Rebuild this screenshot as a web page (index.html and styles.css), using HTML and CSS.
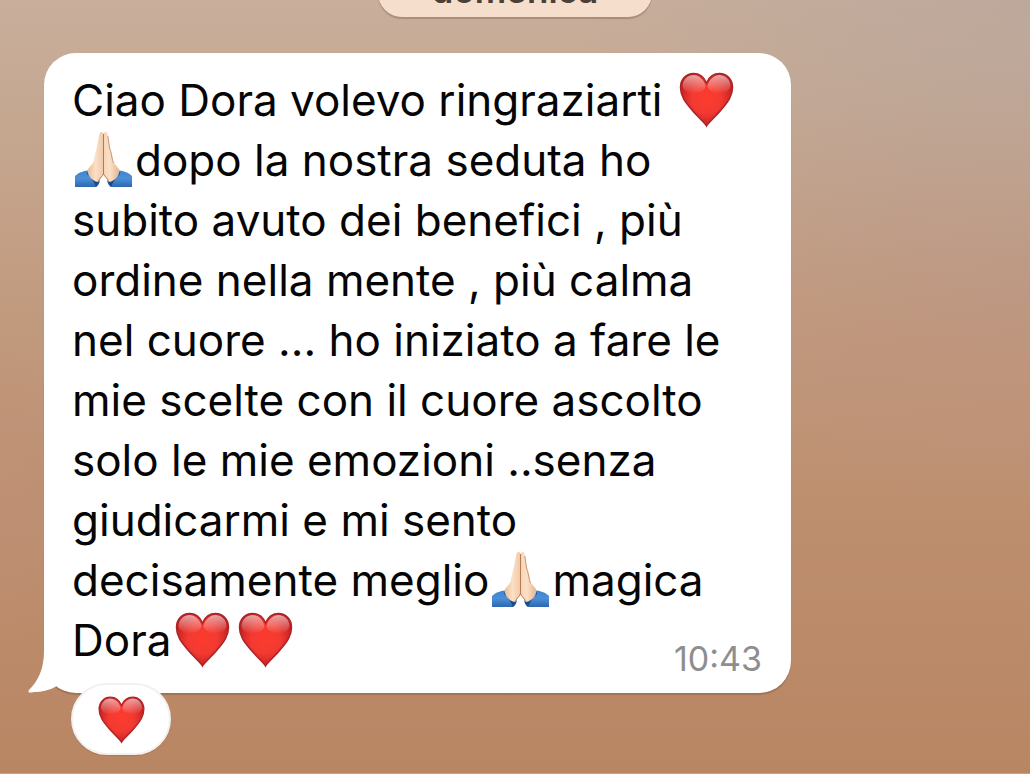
FILE: index.html
```html
<!DOCTYPE html>
<html lang="it">

<head>
    <meta charset="utf-8">
    <meta name="viewport" content="width=device-width, initial-scale=1">
    <title>Chat</title>
    <link rel="stylesheet" href="styles.css">
</head>

<body>
    <svg class="defs" aria-hidden="true">
        <defs>
            <radialGradient id="heartFill" cx="50%" cy="48%" r="56%">
                <stop offset="0" stop-color="#fc3b2e" />
                <stop offset="0.5" stop-color="#f33a31" />
                <stop offset="1" stop-color="#c11c1e" />
            </radialGradient>
            <linearGradient id="heartShine" x1="0" y1="0" x2="0" y2="1">
                <stop offset="0" stop-color="#fff" stop-opacity="0.6" />
                <stop offset="1" stop-color="#fff" stop-opacity="0" />
            </linearGradient>
            <linearGradient id="skinLeft" x1="0" y1="0" x2="1" y2="0">
                <stop offset="0" stop-color="#e9bd98" />
                <stop offset="0.5" stop-color="#fbe0c6" />
                <stop offset="1" stop-color="#efc9a9" />
            </linearGradient>
            <linearGradient id="skinRight" x1="0" y1="0" x2="1" y2="0">
                <stop offset="0" stop-color="#f5d5b9" />
                <stop offset="0.4" stop-color="#fbe0c6" />
                <stop offset="1" stop-color="#e3b48e" />
            </linearGradient>
            <linearGradient id="sleeve" x1="0" y1="0" x2="0" y2="1">
                <stop offset="0" stop-color="#3f83cc" />
                <stop offset="0.5" stop-color="#4a8fd8" />
                <stop offset="1" stop-color="#2d67b0" />
            </linearGradient>
            <symbol id="heart" viewBox="0 0 57 57">
                <path d="M28.500 55C27 52 20 46 14 39C7 31 2.500 25 2.500 16.500C2.500 8 8.500 2.500 15.500 2.500C21.500 2.500 26 6 28.500 12C31 6 35.500 2.500 41.500 2.500C48.500 2.500 54.500 8 54.500 16.500C54.500 25 50 31 43 39C37 46 30 52 28.500 55Z" fill="url(#heartFill)" stroke="#a92529" stroke-width="1.500" />
                <path d="M4.500 15C5 7.500 10.500 4 15.500 4C21 4 25.500 8 27.500 15C26 24 7 26 4.500 15Z" fill="url(#heartShine)" />
                <path d="M29.500 15C31.500 8 36 4 41.500 4C46.500 4 52 7.500 52.500 15C50 26 31 24 29.500 15Z" fill="url(#heartShine)" />
            </symbol>
            <symbol id="hands" viewBox="0 0 57 57">
                <path d="M0 45C4 41 9 40 15 39L25 50C24 53 23 55 21 56H0Z" fill="url(#sleeve)" />
                <path d="M57 45C53 41 48 40 42 39L32 50C33 53 34 55 36 56H57Z" fill="url(#sleeve)" />
                <path d="M12 40C13 45 17 49 23 50L24 52L21 56C19 51 16 46 12 43Z" fill="#1f4a80" />
                <path d="M45 40C44 45 40 49 34 50L33 52L36 56C38 51 41 46 45 43Z" fill="#1f4a80" />
                <path d="M28.500 3C27.500 0 24.500 0.500 24.200 4L22 16C20 22 19.500 26 18.500 31C17 34 14 36 12.500 39C13 45 17 50 23 51C25 47 28.500 46 28.500 42Z" fill="url(#skinLeft)" />
                <path d="M28.500 3C29.500 0 32.500 0.500 32.800 4L35 16C37 22 37.500 26 38.500 31C40 34 43 36 44.500 39C44 45 40 50 34 51C32 47 28.500 46 28.500 42Z" fill="url(#skinRight)" />
                <path d="M28.500 3V42C28.500 45 25 46 23 51M28.500 42C28.500 45 32 46 34 51" fill="none" stroke="#b9794f" stroke-width="1" />
                <path d="M32.800 5L34.500 17C37 24 37 29 38.500 32" fill="none" stroke="#c99873" stroke-width="1" />
            </symbol>
        </defs>
    </svg>
    <main class="chat">
        <div class="date">domenica</div>
        <article class="bubble">
            <p class="message">Ciao Dora volevo ringraziarti <svg class="emoji" role="img" aria-label="cuore"><use href="#heart" /></svg><br>
                <svg class="emoji" role="img" aria-label="mani giunte"><use href="#hands" /></svg>dopo la nostra seduta ho<br>
                subito avuto dei benefici , più<br>
                ordine nella mente , più calma<br>
                nel cuore ... ho iniziato a fare le<br>
                mie scelte con il cuore ascolto<br>
                solo le mie emozioni ..senza<br>
                giudicarmi e mi sento<br>
                decisamente meglio<svg class="emoji" role="img" aria-label="mani giunte"><use href="#hands" /></svg>magica<br>
                Dora<svg class="emoji" role="img" aria-label="cuore"><use href="#heart" /></svg><svg class="emoji" role="img" aria-label="cuore"><use href="#heart" /></svg></p>
            <time class="time" datetime="10:43">10:43</time>
            <svg class="tail" viewBox="0 0 60 60" aria-hidden="true">
                <path d="M16 0V18C16 36 10 48 1 57C-1 60 3 60 6 59C14 59 22 57 29 53C35 58 45 59 60 59V0Z" fill="#fff" />
            </svg>
            <button class="reaction" type="button" aria-label="Reazione cuore"><svg class="reaction-icon" aria-hidden="true"><use href="#heart" /></svg></button>
        </article>
    </main>
</body>

</html>
```
FILE: styles.css
```css
* {
    box-sizing: border-box;
}

body {
    margin: 0;
    font-family: Inter, "Liberation Sans", sans-serif;
    color: #050505;
}

.defs {
    position: absolute;
    width: 0;
    height: 0;
}

.chat {
    display: flex;
    flex-direction: column;
    min-height: 100vh;
    overflow: hidden;
    border-bottom: 1px solid #b5a4a3;
    background-color: #bb8966;
    background-image:
        radial-gradient(ellipse 45% 45% at 100% 0%, rgba(184, 166, 156, 0.7), rgba(184, 166, 156, 0)),
        radial-gradient(ellipse 35% 30% at 100% 38%, rgba(189, 146, 126, 0.6), rgba(189, 146, 126, 0)),
        radial-gradient(ellipse 8% 20% at 0% 64%, rgba(192, 144, 122, 0.5), rgba(192, 144, 122, 0)),
        linear-gradient(to bottom, #c8ae9b 0%, #c6a993 12%, #c29d82 35%, #bd8f6f 65%, #b98663 100%);
}

.date {
    align-self: center;
    margin-top: -42px;
    padding: 12px 54px 6px;
    border-radius: 24px;
    background: #f6decd;
    box-shadow: 0 2px 1px rgba(100, 70, 50, 0.3);
    color: #4b4038;
    font-size: 35px;
    font-weight: 600;
    line-height: 41px;
}

.bubble {
    position: relative;
    isolation: isolate;
    margin: 36px 239px 80px 44px;
    padding: 17px 28px 23px;
    border-radius: 32px;
    background: #fff;
    box-shadow: 0 2px 1px rgba(100, 65, 40, 0.3);
}

.message {
    margin: 0;
    font-size: 44px;
    line-height: 60px;
    white-space: nowrap;
}

.emoji {
    width: 57px;
    height: 57px;
    margin: -6px 3px;
    vertical-align: -6px;
}

/* sits over the empty end of the last line */
.time {
    position: absolute;
    right: 29px;
    bottom: 14px;
    color: #8e8e90;
    font-size: 34px;
    line-height: 40px;
}

.tail {
    position: absolute;
    z-index: -1;
    left: -16px;
    bottom: 0;
    width: 60px;
    height: 60px;
}

.reaction {
    position: absolute;
    left: 27px;
    bottom: -62px;
    display: flex;
    align-items: center;
    justify-content: center;
    width: 100px;
    height: 72px;
    padding: 0;
    border: 2px solid #f3f0ee;
    border-radius: 36px;
    background: #fff;
    box-shadow: 0 1px 1px rgba(100, 65, 40, 0.2);
}

.reaction-icon {
    width: 49px;
    height: 49px;
}
```
